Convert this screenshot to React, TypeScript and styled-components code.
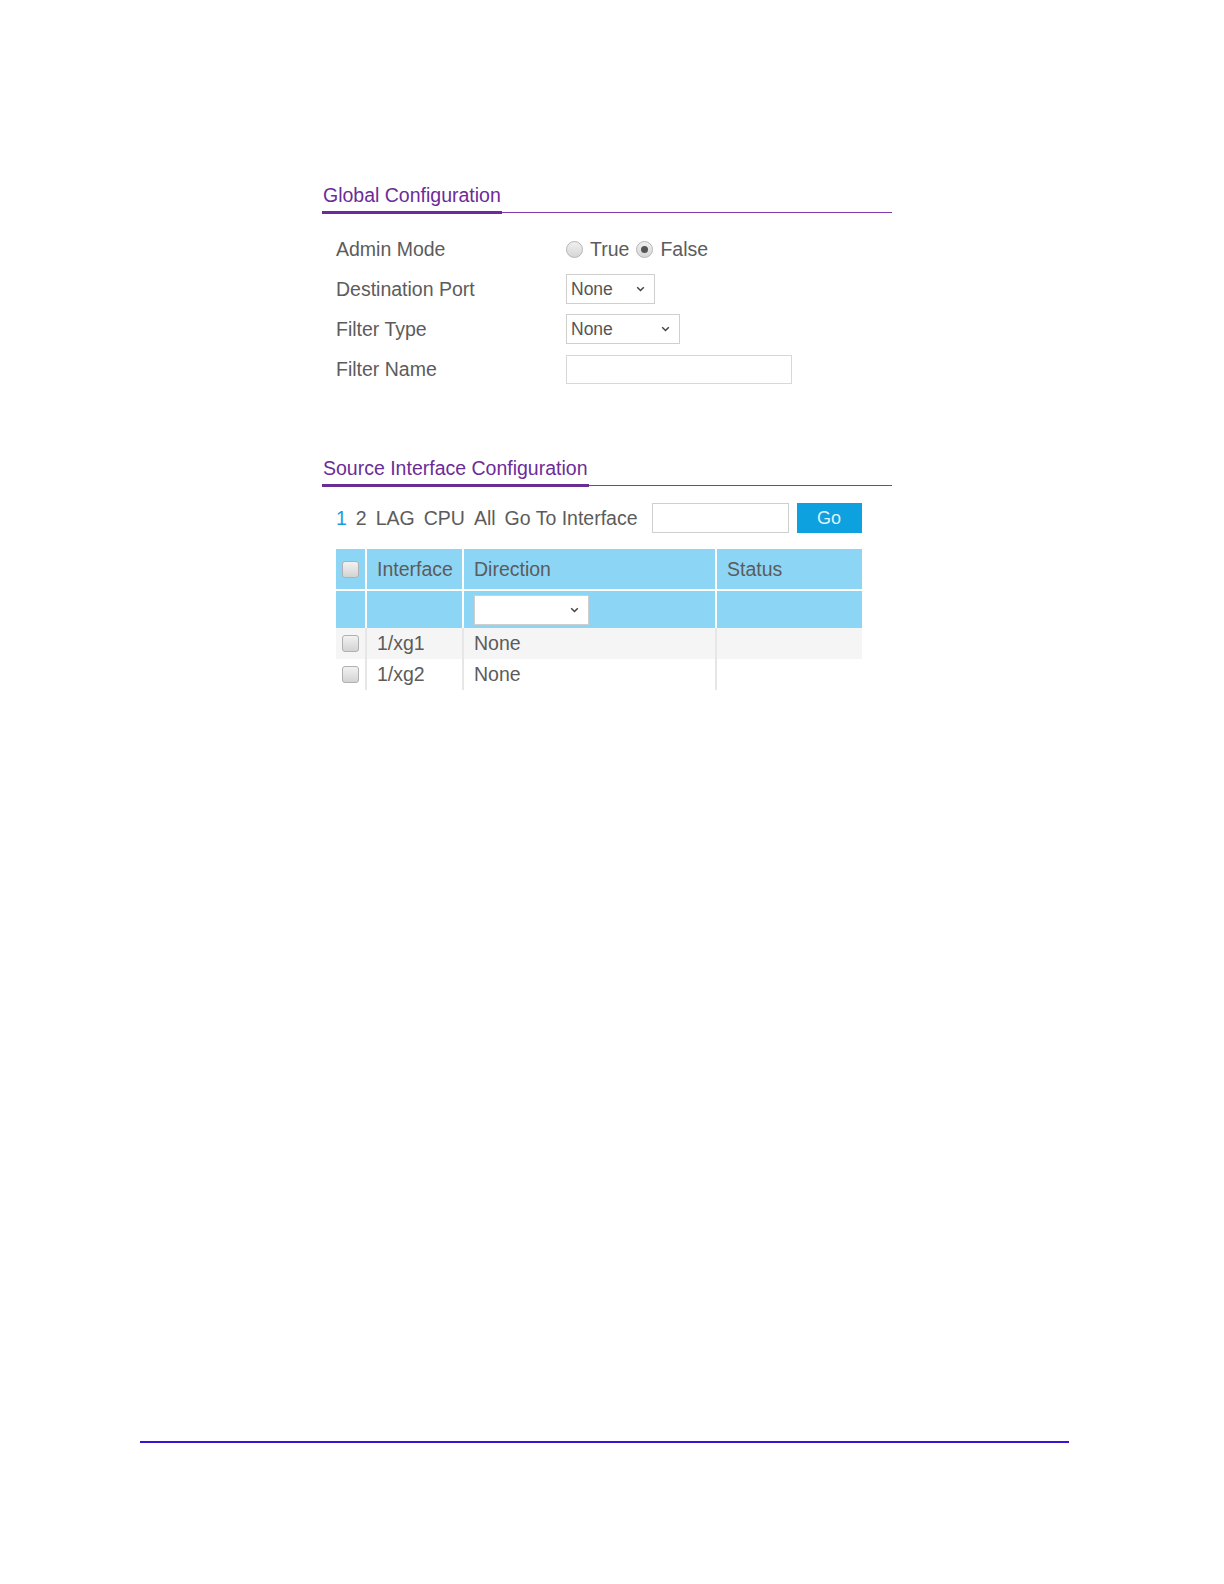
import styled, { createGlobalStyle } from "styled-components";

const GlobalStyle = createGlobalStyle`
  html, body {
    margin: 0;
    padding: 0;
    background: #ffffff;
  }
  body {
    font-family: "Liberation Sans", Arial, sans-serif;
    color: #5a5a5a;
  }
`;

const Page = styled.div`
  width: 1224px;
  height: 1584px;
  display: flex;
  flex-direction: column;
  box-sizing: border-box;
  padding-top: 183px;
`;

const Content = styled.div`
  margin-left: 322px;
  width: 570px;
  display: flex;
  flex-direction: column;
  gap: 67px;
`;

const Section = styled.section`
  display: flex;
  flex-direction: column;
`;

const SectionHead = styled.div`
  border-bottom: 1px solid #7d3ca9;
  display: flex;
`;

const SectionTitle = styled.h2`
  margin: 0 0 -2px 0;
  padding: 0 1px 4px 1px;
  font-size: 19.5px;
  font-weight: 400;
  line-height: 24px;
  color: #6c2c98;
  border-bottom: 3px solid #6c2c98;
`;

const Form = styled.div`
  display: flex;
  flex-direction: column;
  padding: 16px 0 0 14px;
`;

const Row = styled.div`
  display: flex;
  align-items: center;
  height: 40px;
`;

const Label = styled.div`
  width: 230px;
  font-size: 19.5px;
  color: #5c5c5c;
`;

const RadioGroup = styled.div`
  display: flex;
  align-items: center;
  gap: 7px;
  font-size: 19.5px;
  color: #5c5c5c;
`;

const Radio = styled.span<{ $checked?: boolean }>`
  width: 15px;
  height: 15px;
  border-radius: 50%;
  border: 1px solid #b5b5b5;
  background: linear-gradient(#f0f0f0, #d6d6d6);
  display: inline-flex;
  align-items: center;
  justify-content: center;
  &::after {
    content: "";
    width: 7px;
    height: 7px;
    border-radius: 50%;
    background: #555;
    display: ${(p) => (p.$checked ? "block" : "none")};
  }
`;

const SelectBox = styled.div<{ $width: number }>`
  width: ${(p) => p.$width}px;
  height: 30px;
  box-sizing: border-box;
  border: 1px solid #cfcfcf;
  background: #fff;
  display: flex;
  align-items: center;
  justify-content: space-between;
  padding: 0 9px 0 4px;
  font-size: 17.5px;
  color: #555;
`;

const TextInput = styled.div<{ $width: number }>`
  width: ${(p) => p.$width}px;
  height: 29px;
  box-sizing: border-box;
  border: 1px solid #d8d8d8;
  background: #fff;
`;

const NavBar = styled.div`
  display: flex;
  align-items: center;
  padding: 17px 0 0 14px;
  height: 30px;
  font-size: 19.5px;
`;

const NavLink = styled.span<{ $active?: boolean }>`
  color: ${(p) => (p.$active ? "#1d9bd8" : "#5c5c5c")};
  margin-right: 9px;
`;

const GoInput = styled(TextInput)`
  height: 30px;
  margin-left: 5px;
  border-color: #cfcfcf;
`;

const GoButton = styled.button`
  width: 65px;
  height: 30px;
  margin-left: 8px;
  border: none;
  background: #0ea1df;
  color: #dff3fd;
  font-family: "Liberation Sans", Arial, sans-serif;
  font-size: 18px;
  padding: 0;
`;

const Table = styled.table`
  margin: 16px 0 0 14px;
  width: 526px;
  border-collapse: collapse;
  table-layout: fixed;
  font-size: 19.5px;
  color: #5c5c5c;
`;

const HeadCell = styled.th<{ $w?: number }>`
  width: ${(p) => (p.$w ? `${p.$w}px` : "auto")};
  background: #8cd5f5;
  height: 41px;
  box-sizing: border-box;
  padding: 0 10px;
  font-weight: 400;
  text-align: left;
  border-left: 2px solid #ffffff;
  border-bottom: 2px solid #ffffff;
  &:first-child {
    border-left: none;
    padding: 0 0 0 6px;
  }
`;

const FilterCell = styled.td`
  background: #8cd5f5;
  height: 38px;
  box-sizing: border-box;
  padding: 0 10px;
  border-left: 2px solid #ffffff;
  &:first-child {
    border-left: none;
  }
`;

const BodyRow = styled.tr<{ $shaded?: boolean }>`
  background: ${(p) => (p.$shaded ? "#f5f5f5" : "#ffffff")};
`;

const BodyCell = styled.td`
  height: 31px;
  padding: 0 10px;
  border-left: 2px solid #e6e6e6;
  &:first-child {
    border-left: none;
    padding: 0 0 0 6px;
  }
`;

const Checkbox = styled.span`
  display: block;
  width: 15px;
  height: 15px;
  border-radius: 3px;
  border: 1px solid #b0b0b0;
  background: linear-gradient(#f2f2f2, #d3d3d3);
`;

const Footer = styled.div`
  margin: auto 0 141px 140px;
  width: 929px;
  height: 2px;
  background: #3a12d6;
`;

const Chevron = () => (
  <svg width="9" height="6" viewBox="0 0 9 6">
    <path d="M1.2 1.2 L4.5 4.5 L7.8 1.2" fill="none" stroke="#444" strokeWidth="1.5" />
  </svg>
);

const rows = [
  { name: "1/xg1", direction: "None" },
  { name: "1/xg2", direction: "None" },
];

export default function App() {
  return (
    <>
      <GlobalStyle />
      <Page>
        <Content>
          <Section>
            <SectionHead>
              <SectionTitle>Global Configuration</SectionTitle>
            </SectionHead>
            <Form>
              <Row>
                <Label>Admin Mode</Label>
                <RadioGroup>
                  <Radio />
                  <span>True</span>
                  <Radio $checked />
                  <span>False</span>
                </RadioGroup>
              </Row>
              <Row>
                <Label>Destination Port</Label>
                <SelectBox $width={89}>
                  <span>None</span>
                  <Chevron />
                </SelectBox>
              </Row>
              <Row>
                <Label>Filter Type</Label>
                <SelectBox $width={114}>
                  <span>None</span>
                  <Chevron />
                </SelectBox>
              </Row>
              <Row>
                <Label>Filter Name</Label>
                <TextInput $width={226} />
              </Row>
            </Form>
          </Section>

          <Section>
            <SectionHead>
              <SectionTitle>Source Interface Configuration</SectionTitle>
            </SectionHead>
            <NavBar>
              <NavLink $active>1</NavLink>
              <NavLink>2</NavLink>
              <NavLink>LAG</NavLink>
              <NavLink>CPU</NavLink>
              <NavLink>All</NavLink>
              <NavLink>Go To Interface</NavLink>
              <GoInput $width={137} />
              <GoButton>Go</GoButton>
            </NavBar>
            <Table>
              <thead>
                <tr>
                  <HeadCell $w={30}>
                    <Checkbox />
                  </HeadCell>
                  <HeadCell $w={97}>Interface</HeadCell>
                  <HeadCell $w={253}>Direction</HeadCell>
                  <HeadCell>Status</HeadCell>
                </tr>
                <tr>
                  <FilterCell />
                  <FilterCell />
                  <FilterCell>
                    <SelectBox $width={115}>
                      <span />
                      <Chevron />
                    </SelectBox>
                  </FilterCell>
                  <FilterCell />
                </tr>
              </thead>
              <tbody>
                {rows.map((r, i) => (
                  <BodyRow key={r.name} $shaded={i === 0}>
                    <BodyCell>
                      <Checkbox />
                    </BodyCell>
                    <BodyCell>{r.name}</BodyCell>
                    <BodyCell>{r.direction}</BodyCell>
                    <BodyCell />
                  </BodyRow>
                ))}
              </tbody>
            </Table>
          </Section>
        </Content>
        <Footer />
      </Page>
    </>
  );
}
